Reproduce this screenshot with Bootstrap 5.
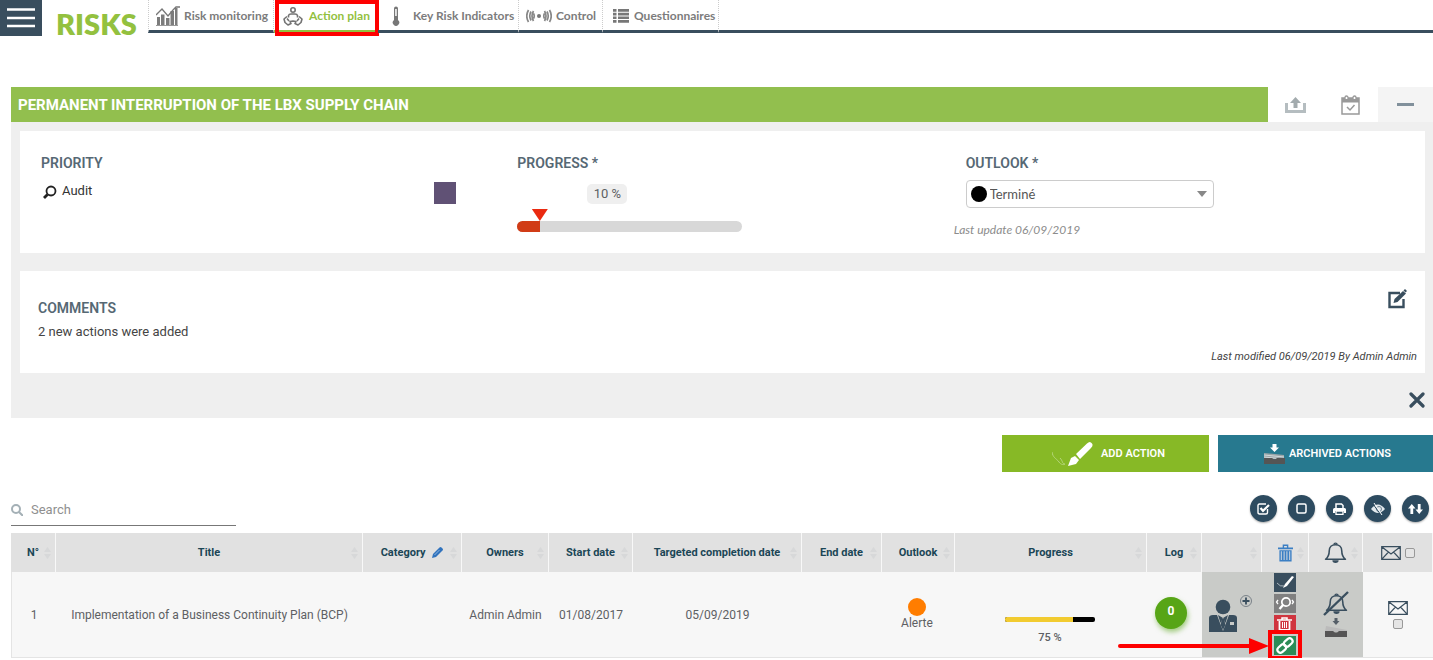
<!DOCTYPE html>
<html lang="en">
<head>
<meta charset="utf-8">
<meta name="viewport" content="width=device-width, initial-scale=1">
<title>Risks - Action plan</title>
<link href="https://cdn.jsdelivr.net/npm/bootstrap@5.3.0/dist/css/bootstrap.min.css" rel="stylesheet">
<style>
  :root { --navy: #394e5e; --lime: #93c13f; --mark-red: #fe0000; --head-font: Lato, sans-serif; }
  body { font-family: Roboto, "Liberation Sans", sans-serif; font-size: 13px; line-height: 20px; color: #5d6063; background: #fff; }
  svg { display: block; flex: none; }
  .icon-btn { border: 0; padding: 0; background: none; display: flex; align-items: center; justify-content: center; }

  /* top bar */
  .top-bar { height: 37px; }
  .menu-toggle { width: 42px; height: 36px; background: var(--navy); border-radius: 0; }
  .brand { font-family: var(--head-font); font-weight: 800; font-size: 29px; line-height: 36px; padding-top: 6px; width: 106px; padding-left: 14px; color: var(--lime); }
  .tabs { height: 33px; }
  .tabs .tab, .tabs .rest { border-bottom: 3px solid var(--navy); height: 33px; }
  .tab { font-family: var(--head-font); font-weight: 700; font-size: 12px; line-height: 20px; padding-top: 2px; color: #7c7c7c; text-decoration: none; border-right: 1px dotted #ccc; padding-left: 7px; position: relative; white-space: nowrap; }
  .tab:first-child { border-left: 1px dotted #ccc; }
  .tab.current { color: var(--lime); border-bottom-color: var(--lime) !important; padding-left: 9px; }
  .tab.current::after { content: ""; position: absolute; inset: 0 -2px -6px 1px; border: 4px solid var(--mark-red); }
  .w-monitor { width: 126px; } .w-plan { width: 104px; } .w-kri { width: 141px; } .w-control { width: 84px; } .w-quest { width: 116px; }

  /* risk panel */
  .risk { margin: 50px 0 0 11px; }
  .risk-title { background: #92bf4e; color: #fff; font-size: 15px; font-weight: 700; line-height: 34px; padding: 1px 0 0 7px; margin: 0; }
  .risk-tool { width: 55px; height: 35px; }
  .risk-tool.fold { background: #f4f4f4; }
  .risk-body { background: #efefef; padding: 9px 8px 7px 9px; }
  .box { background: #fff; margin-bottom: 18px; }
  .box-top { height: 122px; padding-top: 22px; }
  .box-comments { margin-bottom: 16px; }
  .label-cap { font-size: 14px; font-weight: 600; line-height: 20px; color: #566874; display: block; margin: 0; }
  .col-priority { padding: 0 32px 0 21px; } .col-progress { padding-left: 29px; } .col-outlook { padding-left: 9px; }
  .prio { color: #333; }
  .swatch { width: 22px; height: 22px; background: #605175; margin-top: 1px; }
  .percent { background: #efefef; border-radius: 5px; padding: 0 6px; display: block; width: 40px; text-align: center; white-space: nowrap; margin: 11px 0 17px 70px; }
  .slider { width: 225px; }
  .slider .progress { height: 11px; border-radius: 6px; background: #d8d8d8; }
  .slider .progress-bar { background: #d13c16; }
  .slider input { position: absolute; left: -8px; top: -12px; width: 241px; height: 12px; margin: 0; appearance: none; background: none; }
  .slider input::-webkit-slider-thumb { appearance: none; width: 16px; height: 12px; background: #ea2a10; clip-path: polygon(0 0, 100% 0, 50% 100%); }
  .pick { position: relative; width: 248px; margin-top: 7px; }
  .pick select { appearance: none; width: 100%; height: 28px; font-family: var(--head-font); font-size: 13px; line-height: 20px; padding: 0 24px 0 23px; border: 1px solid #ccc; border-radius: 4px; background: #fff; color: #555; }
  .pick .dot { position: absolute; left: 5px; top: 6px; width: 16px; height: 16px; border-radius: 50%; background: #000; }
  .pick svg { position: absolute; right: 7px; top: 11px; }
  .updated { font-family: var(--head-font); font-size: 12px; font-style: italic; color: #8c8c8c; margin: 12px 0 0 -12px; }
  .box-comments { height: 102px; padding: 18px 8px 0 18px; }
  .comment-head { padding-top: 9px; }
  .comment { font-size: 13px; margin: 4px 0 0; color: #444; }
  .modified { font-size: 11px; font-style: italic; color: #444; margin: 5px 0 0; text-align: right; }
  .edit-btn { margin-right: 10px; }

  /* action buttons */
  .action-row { margin-top: 17px; }
  .act { height: 37px; border: 0; color: #fff; font-size: 11px; font-weight: 600; display: flex; align-items: center; justify-content: center; white-space: nowrap; }
  .act-add { background: #87b926; width: 207px; gap: 8px; padding-left: 12px; margin-right: 9px; }
  .act-arch { background: #27798f; width: 215px; gap: 4px; padding-left: 10px; }

  .list-head { margin: 23px 4px 7px 11px; }
  .find { width: 225px; border-bottom: 1px solid #777; height: 31px; }
  .find input { border: 0; outline: 0; font-size: 13px; padding: 0; width: 180px; }
  .find input::placeholder { color: #8f8f8f; opacity: 1; }
  .rounds { gap: 11px; }
  .round { width: 27px; height: 27px; border-radius: 50%; background: #2d4b60; box-shadow: 0 1px 2px #0005; }

  /* actions table */
  .table-wrap { margin-left: 11px; }
  .grid { width: 100%; table-layout: fixed; border-collapse: separate; border-spacing: 0; }
  .grid th { height: 39px; background: #e1e1e1; border-right: 1px solid #f8f8f8; color: #1b4656; font-size: 11px; font-weight: 700; text-align: center; vertical-align: middle; padding: 0; position: relative; white-space: nowrap; }
  .grid td { height: 86px; background: #f7f7f7; border-bottom: 1px solid #e4e4e4; text-align: center; vertical-align: middle; padding: 0; font-size: 12px; white-space: nowrap; }
  .grid td:first-child { border-left: 1px solid #e4e4e4; }
  .grid td.shade { background: #c9cbc8; }
  .sorter { position: absolute; right: 4px; top: 14px; fill: #d7d8d9; }
  .c-n { width: 45px; } .c-cat { width: 99px; } .c-own { width: 87px; } .c-start { width: 84px; } .c-target { width: 169px; } .c-end { width: 80px; } .c-out { width: 73px; } .c-prog { width: 192px; } .c-log { width: 55px; } .c-user { width: 60px; } .c-del { width: 47px; } .c-bell { width: 54px; } .c-mail { width: 70px; }
  .grid td.out-cell { padding-right: 3px; }
  .state { width: 18px; height: 18px; border-radius: 50%; background: #ff7d00; }
  .grid td.prog-cell { padding-right: 2px; }
  .meter { width: 90px; height: 5px; background: #000; border-radius: 2px; margin: 36px auto 6px; }
  .meter .progress-bar { background: #f2cb30; }
  .pct { font-size: 11px; font-weight: 500; }
  .grid td.log-cell { padding: 0 7px 3px 0; }
  .log { width: 32px; height: 32px; border-radius: 50%; background: #57a516; color: #fff; font-size: 12px; font-weight: 700; box-shadow: 1px 3px 5px #57a51688; margin: 0 auto; padding-bottom: 4px; }
  .tool { width: 22px; height: 19px; }
  .t-edit { background: var(--navy); } .t-view { background: #808080; } .t-bin { background: #d0353f; } .t-link { background: #2b8c57; }
  .tools { gap: 2px; padding: 0 2px 2px 0; }
  .linked { position: relative; }
  .linked::after { content: ""; position: absolute; inset: -6px -6px -5px; border: 4px solid var(--mark-red); pointer-events: none; }
  .linked .pointer { position: absolute; right: 27px; top: 2px; }
  .chk { appearance: none; width: 10px; height: 10px; border: 1px solid #999; border-radius: 2px; background: #e5e5e5; margin: 0; display: block; }
</style>
</head>
<body>
<svg width="0" height="0" class="position-absolute" aria-hidden="true">
  <symbol id="sort" viewBox="0 0 7 12"><path d="M0 5 3.500 0 7 5ZM0 7 3.500 12 7 7Z"/></symbol>
  <symbol id="mail" viewBox="0 0 20 14"><path d="M.7.7h18.600v12.600H.7ZM.7.700 10 8 19.300.7M.7 13.300 7.500 6M19.300 13.300 12.500 6" fill="none" stroke="#394e5e" stroke-width="1.200"/></symbol>
  <symbol id="bin" viewBox="0 0 16 18"><path d="M0 3h16v2H0ZM5 0h6v3H9.500V1.400h-3V3H5ZM1.500 6h13v12h-13ZM3 7v9.500h1V7Zm3 0v9.500h1V7Zm3 0v9.500h1V7Zm3 0v9.500h1V7Z" fill-rule="evenodd"/></symbol>
  <symbol id="bell" viewBox="0 0 22 22"><path d="M1.500 17.500C4.500 15 5 12 5 9.500 5 6 7.500 3.500 11 3.500S17 6 17 9.500c0 2.500.5 5.500 3.500 8Z" fill="none" stroke="#394e5e" stroke-width="1.500" stroke-linejoin="round"/><path d="M9.500 3.500a1.500 1.500 0 1 1 3 0" fill="none" stroke="#394e5e" stroke-width="1.300"/><path d="M8 18.500h6a3 2.500 0 0 1-6 0Z" fill="#394e5e"/></symbol>
</svg>

<header class="top-bar d-flex">
  <button class="menu-toggle icon-btn" type="button" aria-label="Menu">
    <svg width="28" height="20" viewBox="0 0 28 20"><path d="M0 1.500h28M0 10h28M0 18h28" stroke="#fff" stroke-width="2.600"/></svg>
  </button>
  <div class="brand">RISKS</div>
  <nav class="tabs d-flex flex-grow-1" aria-label="Modules">
    <a href="#" class="tab w-monitor d-flex align-items-center gap-1">
      <svg width="24" height="20" viewBox="0 0 24 20" fill="#7c7c7c"><path d="M1 11h3v8H1ZM5 8.500h3.500V19H5ZM10 12h3.500v7H10ZM14.500 5H18v14h-3.500ZM19 2h2.500v17H19Z"/><path d="M0 9 6 3l6 7 5-6 3-3h4" fill="none" stroke="#777" stroke-width="1.300"/><path d="M0 19.500h22" stroke="#999"/></svg>
      <span>Risk monitoring</span></a>
    <a href="#" class="tab w-plan current d-flex align-items-center gap-1" aria-current="page">
      <svg width="22" height="19" viewBox="0 0 22 19" fill="none" stroke="#737373" stroke-width="1.600" stroke-linejoin="round"><circle cx="10" cy="3" r="2.200"/><path d="M5.500 10.500V8.500Q6 7 8 7h4q2 0 2.500 1.500v2M4 9.500 1 12l1 3.500 3 2.500 3-1.500-1-2 3-.5 3 .5-1 2 3 1.500 3-2.500 1-3.500-3-2.500M4 11.500l2 2.500M16 11.500 14 14"/></svg>
      <span>Action plan</span></a>
    <a href="#" class="tab w-kri d-flex align-items-center gap-2">
      <svg width="20" height="20" viewBox="0 0 20 20"><path d="M9 2.500a2 2 0 0 1 4 0V14a3.200 3.200 0 1 1-4 0Z" fill="#777"/><path d="M10.200 3h1.500v7h-1.500Z" fill="#fff"/></svg>
      <span>Key Risk Indicators</span></a>
    <a href="#" class="tab w-control d-flex align-items-center gap-1">
      <svg width="26" height="14" viewBox="0 0 26 14" fill="none" stroke="#888" stroke-width="1.700"><circle cx="13" cy="7" r="2" fill="#777" stroke="none"/><path d="M7.500 4.500Q9 7 7.500 9.500M5 2.500Q2.500 7 5 11.500M2.500 1Q-1 7 2.500 13M7.500 2Q4.500 7 7.500 12M18.500 4.500Q17 7 18.500 9.500M21 2.500Q23.500 7 21 11.500M23.500 1Q27 7 23.500 13M18.500 2Q21.500 7 18.500 12"/></svg>
      <span>Control</span></a>
    <a href="#" class="tab w-quest d-flex align-items-center gap-1">
      <svg width="20" height="14" viewBox="0 0 20 14" fill="#777"><path d="M3 0h3.500v2.700H3ZM8 0h11v2.700H8ZM3 3.700h3.500v2.700H3ZM8 3.700h11v2.700H8ZM3 7.400h3.500v2.700H3ZM8 7.400h11v2.700H8ZM3 11.100h3.500v2.700H3ZM8 11.100h11v2.700H8Z"/></svg>
      <span>Questionnaires</span></a>
    <div class="rest flex-grow-1"></div>
  </nav>
</header>

<main>
  <section class="risk">
    <div class="d-flex">
      <h1 class="risk-title flex-grow-1">PERMANENT INTERRUPTION OF THE LBX SUPPLY CHAIN</h1>
      <button type="button" class="risk-tool icon-btn" aria-label="Export"><svg width="21" height="16" viewBox="0 0 21 16"><path d="M0 6h3v7h15V6h3v10H0Z" fill="#b5bdc0"/><path d="M10.500 0 16 6h-3.500v5h-4V6H5Z" fill="#a3abae"/></svg></button>
      <button type="button" class="risk-tool icon-btn" aria-label="Schedule"><svg width="19" height="20" viewBox="0 0 19 20"><path d="M1 3h17v16H1Z" fill="#fff" stroke="#999" stroke-width="1.500"/><path d="M1 3h17v4.500H1Z" fill="#999"/><path d="M4 4V2.500a1.500 1.500 0 0 1 3 0V4M12 4V2.500a1.500 1.500 0 0 1 3 0V4" fill="#fff" stroke="#999" stroke-width="1.300"/><path d="m6 12 3 3 4.500-5" fill="none" stroke="#999" stroke-width="1.500"/></svg></button>
      <button type="button" class="risk-tool fold icon-btn" aria-label="Collapse"><svg width="17" height="3" viewBox="0 0 17 3"><path d="M0 0h17v3H0Z" fill="#81909b"/></svg></button>
    </div>
    <div class="risk-body">
      <div class="box box-top">
        <div class="row g-0">
          <div class="col-4 col-priority">
            <h2 class="label-cap">PRIORITY</h2>
            <div class="d-flex justify-content-between mt-2">
              <span class="prio d-flex gap-1"><svg class="mt-1" width="17" height="14" viewBox="0 0 17 14" fill="none" stroke="#222"><circle cx="10" cy="6" r="4.500" stroke-width="1.800"/><path d="M6.500 9.500 3 13" stroke-width="2.800"/></svg>Audit</span>
              <span class="swatch"></span>
            </div>
          </div>
          <div class="col-4 col-progress">
            <label class="label-cap" for="progress">PROGRESS *</label>
            <div class="slider">
              <output class="percent" for="progress">10 %</output>
              <div class="position-relative">
                <div class="progress"><div class="progress-bar" style="width:10%"></div></div>
                <input id="progress" type="range" min="0" max="100" value="10">
              </div>
            </div>
          </div>
          <div class="col-4 col-outlook">
            <label class="label-cap" for="outlook">OUTLOOK *</label>
            <div class="pick">
              <select id="outlook"><option>Terminé</option><option>Alerte</option></select>
              <span class="dot"></span>
              <svg width="10" height="6" viewBox="0 0 10 6"><path d="M0 0h10L5 6Z" fill="#888"/></svg>
            </div>
            <p class="updated">Last update 06/09/2019</p>
          </div>
        </div>
      </div>
      <div class="box box-comments">
        <div class="d-flex justify-content-between align-items-start">
          <h2 class="label-cap comment-head">COMMENTS</h2>
          <button type="button" class="icon-btn edit-btn" aria-label="Edit comments"><svg width="19" height="20" viewBox="0 0 19 20"><path d="M12 4H1.500v14h14V10" fill="none" stroke="#394e5e" stroke-width="2.400"/><path d="m5.500 14 1-4L15 2l3 2.500L9.500 13Z" fill="#394e5e"/><path d="m15.500 1.500 1.500-1.500 2 2-1.500 1.500Z" fill="#394e5e"/></svg></button>
        </div>
        <p class="comment">2 new actions were added</p>
        <p class="modified">Last modified 06/09/2019 By Admin Admin</p>
      </div>
      <div class="d-flex justify-content-end">
        <button type="button" class="icon-btn" aria-label="Close"><svg width="16" height="22" viewBox="0 0 16 22"><path d="m2 5 12 12M14 5 2 17" stroke="#394e5e" stroke-width="3.200" stroke-linecap="round"/></svg></button>
      </div>
    </div>
  </section>

  <div class="d-flex justify-content-end action-row">
    <button type="button" class="act act-add"><svg width="41" height="26" viewBox="0 0 41 26"><path d="M0 11c1 6 4 6 7 10 2 3 5 3 6 2-3 0-2-3-5-6" fill="none" stroke="#b5d57a"/><path d="m16 25 3-8 4-2 4 4-3 4Z" fill="#fff"/><path d="M24 13 35 2.500q3-3 5 0 1.500 2-1 4.500L28 18Z" fill="#fff"/></svg>ADD ACTION</button>
    <button type="button" class="act act-arch"><svg width="21" height="20" viewBox="0 0 21 20"><path d="M0 9 20 11v4H0Z" fill="#9aa5a8"/><path d="m0 11 20 2M0 13l20 2" stroke="#dfe6e8" stroke-width=".8"/><path d="M0 14h8q2.500 2.500 5 0h8v6H0Z" fill="#555"/><path d="M8.500 0h4v3.500h2.500L10.500 8 6 3.500h2.500Z" fill="#fff"/></svg>ARCHIVED ACTIONS</button>
  </div>

  <div class="d-flex justify-content-between list-head">
    <label class="find d-flex align-items-center gap-2">
      <svg width="12" height="12" viewBox="0 0 12 12" fill="none" stroke="#a4b0b6" stroke-width="2"><circle cx="5" cy="5" r="4"/><path d="m8 8 4 4"/></svg>
      <input type="search" placeholder="Search" aria-label="Search">
    </label>
    <div class="d-flex rounds">
      <button type="button" class="round icon-btn" aria-label="Select all"><svg width="13" height="12" viewBox="0 0 13 12" fill="none" stroke="#fff"><path d="M10.500 6v3.500q0 1.500-1.500 1.500H2.500Q1 11 1 9.500v-7Q1 1 2.500 1H9" stroke-width="1.400"/><path d="m3.500 5 2.500 2.800L12 2" stroke-width="2.200"/></svg></button>
      <button type="button" class="round icon-btn" aria-label="Deselect all"><svg width="11" height="11" viewBox="0 0 11 11"><rect x="1" y="1" width="9" height="9" rx="1.500" fill="none" stroke="#fff" stroke-width="1.500"/></svg></button>
      <button type="button" class="round icon-btn" aria-label="Print"><svg width="13" height="12" viewBox="0 0 13 12"><path d="M3 5V1h5.500L10 2.500V5" fill="none" stroke="#fff" stroke-width="1.500"/><path d="M0 10V6.500Q0 5 1.500 5h10Q13 5 13 6.500V10h-2V8H2v2Z" fill="#fff"/><path d="M3 8h7v3.300H3Z" fill="none" stroke="#fff" stroke-width="1.300"/></svg></button>
      <button type="button" class="round icon-btn" aria-label="Hide"><svg width="14" height="12" viewBox="0 0 14 12"><path d="M0 6q7-9 14 0-7 8-14 0Z" fill="#e3e9ed"/><circle cx="8" cy="6" r="2.500" fill="none" stroke="#6b8190"/><path d="m2 1 8 11" stroke="#2d4b60"/><path d="m3 0 8 12" stroke="#fff"/></svg></button>
      <button type="button" class="round icon-btn" aria-label="Reorder"><svg width="15" height="10" viewBox="0 0 15 10" fill="#fff"><path d="M3.800 0 7.500 4.500H5.200V10H2.400V4.500H0ZM11.200 10 7.500 5.500H9.800V0h2.800v5.500H15Z"/></svg></button>
    </div>
  </div>

  <div class="table-wrap">
  <table class="grid">
    <colgroup><col class="c-n"><col><col class="c-cat"><col class="c-own"><col class="c-start"><col class="c-target"><col class="c-end"><col class="c-out"><col class="c-prog"><col class="c-log"><col class="c-user"><col class="c-del"><col class="c-bell"><col class="c-mail"></colgroup>
    <thead>
      <tr>
        <th scope="col">N°<svg class="sorter" width="7" height="12"><use href="#sort"/></svg></th>
        <th scope="col">Title<svg class="sorter" width="7" height="12"><use href="#sort"/></svg></th>
        <th scope="col">Category <svg class="d-inline ms-1" width="11" height="11" viewBox="0 0 11 11"><path d="m0 11 1-4L7.500.500q1-1 2 0l1 1q1 1 0 2L4 10Z" fill="#3173bd"/><path d="m2.500 8 5-5" stroke="#8db6e2"/></svg><svg class="sorter" width="7" height="12"><use href="#sort"/></svg></th>
        <th scope="col">Owners<svg class="sorter" width="7" height="12"><use href="#sort"/></svg></th>
        <th scope="col">Start date<svg class="sorter" width="7" height="12"><use href="#sort"/></svg></th>
        <th scope="col">Targeted completion date<svg class="sorter" width="7" height="12"><use href="#sort"/></svg></th>
        <th scope="col">End date<svg class="sorter" width="7" height="12"><use href="#sort"/></svg></th>
        <th scope="col">Outlook<svg class="sorter" width="7" height="12"><use href="#sort"/></svg></th>
        <th scope="col">Progress<svg class="sorter" width="7" height="12"><use href="#sort"/></svg></th>
        <th scope="col">Log<svg class="sorter" width="7" height="12"><use href="#sort"/></svg></th>
        <th scope="col" aria-label="Assignee"><svg class="sorter" width="7" height="12"><use href="#sort"/></svg></th>
        <th scope="col" aria-label="Delete"><svg class="mx-auto" width="15" height="18" fill="#3b7fc4"><use href="#bin"/></svg><svg class="sorter" width="7" height="12"><use href="#sort"/></svg></th>
        <th scope="col" aria-label="Alerts"><svg class="mx-auto" width="23" height="23"><use href="#bell"/></svg><svg class="sorter" width="7" height="12"><use href="#sort"/></svg></th>
        <th scope="col" aria-label="Mail"><span class="d-flex align-items-center justify-content-center gap-1"><svg width="20" height="14"><use href="#mail"/></svg><input class="chk" type="checkbox" aria-label="Mail all"></span></th>
      </tr>
    </thead>
    <tbody>
      <tr>
        <td>1</td>
        <td>Implementation of a Business Continuity Plan (BCP)</td>
        <td></td>
        <td>Admin Admin</td>
        <td>01/08/2017</td>
        <td>05/09/2019</td>
        <td></td>
        <td class="out-cell"><div class="state mx-auto"></div><div class="lh-sm">Alerte</div></td>
        <td class="prog-cell"><div class="progress meter"><div class="progress-bar" style="width:75%"></div></div><div class="pct">75 %</div></td>
        <td class="log-cell"><div class="log d-flex align-items-center justify-content-center">0</div></td>
        <td class="shade"><button type="button" class="icon-btn mx-auto" aria-label="Assign owner"><svg width="46" height="40" viewBox="0 0 46 40"><circle cx="14" cy="12" r="7.300" fill="#394e5e"/><path d="M0 37V23q0-3 4-3h20q4 0 4 3v14Z" fill="#394e5e"/><path d="m8 20 6 16 6-16Z" fill="#c9cbc8"/><path d="m9 20 5 3-2.500 5ZM19 20l-5 3 2.500 5Z" fill="#394e5e"/><path d="M12.700 24h2.600l1 6-2.300 5-2.300-5Z" fill="#394e5e"/><path d="M21 27h4v3h-4Z" fill="#c9cbc8"/><circle cx="37" cy="6" r="5.500" fill="none" stroke="#7a8289"/><path d="M37 2.500v7M33.500 6h7" stroke="#394e5e" stroke-width="1.800"/></svg></button></td>
        <td class="shade">
          <div class="tools d-flex flex-column align-items-center">
            <button type="button" class="tool t-edit icon-btn" aria-label="Edit"><svg width="18" height="14" viewBox="0 0 18 14"><path d="M1 8q3 4 7 3" fill="none" stroke="#aab5bd"/><path d="m7 13 2-4L16 1l2 1-7 9Z" fill="#fff"/></svg></button>
            <button type="button" class="tool t-view icon-btn" aria-label="View"><svg width="20" height="14" viewBox="0 0 20 14" fill="none" stroke="#fff"><circle cx="11" cy="6" r="4.200" stroke-width="1.700"/><path d="M8 9 4.500 13" stroke-width="2.400"/><path d="M3 4 1.500 6 3 8M17 4 18.500 6 17 8" stroke-width="1.300"/></svg></button>
            <button type="button" class="tool t-bin icon-btn" aria-label="Delete"><svg width="15" height="14" viewBox="0 0 15 14" fill="none" stroke="#fff"><path d="M0 3h15M5 2.500V1h5v1.500" stroke-width="1.500"/><path d="M2.500 4v9h10V4" stroke-width="1.800"/><path d="M5.500 5v6M7.500 5v6M9.500 5v6"/></svg></button>
            <div class="linked">
              <svg class="pointer" width="151" height="16" viewBox="0 0 151 16"><path d="M2 8h133" stroke="#fe0000" stroke-width="4" stroke-linecap="round"/><path d="m131 0 20 8-20 8Z" fill="#fe0000"/></svg>
              <button type="button" class="tool t-link icon-btn" aria-label="Link"><svg width="18" height="17" viewBox="0 0 18 17" fill="none" stroke="#fff" stroke-width="2.200"><rect x="7.500" y="2.500" width="9.500" height="6" rx="3" transform="rotate(-42 12.200 5.500)"/><rect x="1" y="8.500" width="9.500" height="6" rx="3" transform="rotate(-42 5.800 11.500)"/></svg></button>
            </div>
          </div>
        </td>
        <td class="shade"><button type="button" class="icon-btn mx-auto" aria-label="Alerts off and archive"><svg width="28" height="50" viewBox="0 0 28 50"><use href="#bell" x="3" y="2" width="23" height="23"/><path d="M2 25 26 2" stroke="#394e5e" stroke-width="2.400"/><path d="M12.500 28h3v3h2L14 35l-3.500-4h2Z" fill="#555f68"/><path d="m4 36 21 4v2H3Z" fill="#bbb"/><path d="M3 41h8q3 3 6 0h8v6H3Z" fill="#555"/></svg></button></td>
        <td><svg class="mx-auto" width="20" height="14"><use href="#mail"/></svg><input class="chk mx-auto mt-1" type="checkbox" aria-label="Mail action 1"></td>
      </tr>
    </tbody>
  </table>
  </div>
</main>
<script src="https://cdn.jsdelivr.net/npm/bootstrap@5.3.0/dist/js/bootstrap.bundle.min.js"></script>
</body>
</html>
